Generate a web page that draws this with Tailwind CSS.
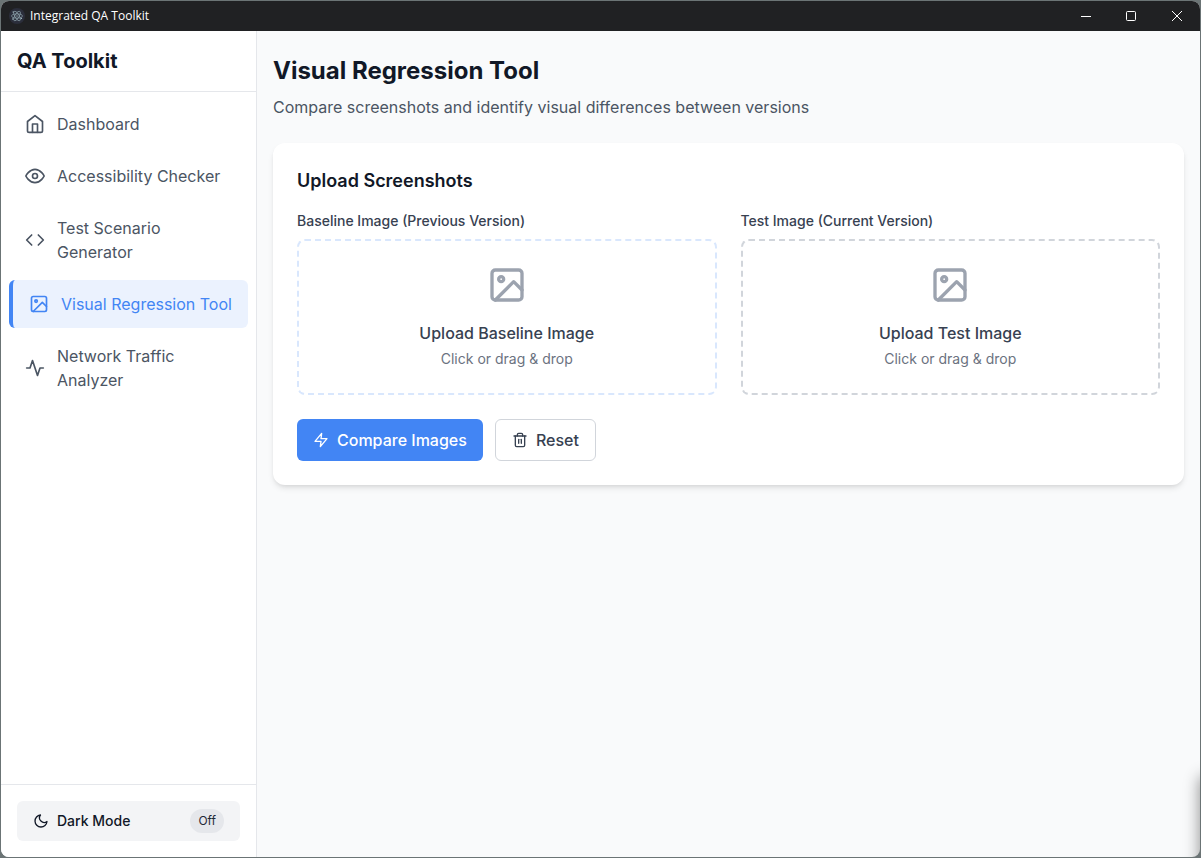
<!DOCTYPE html>
<html lang="en">
<head>
<meta charset="utf-8">
<meta name="viewport" content="width=device-width, initial-scale=1">
<title>Integrated QA Toolkit</title>
<script src="https://cdn.jsdelivr.net/npm/@tailwindcss/browser@4"></script>
</head>
<body class="bg-[#6b7475] font-['Inter',sans-serif] text-[#111827]">
<svg class="hidden" aria-hidden="true">
  <symbol id="image" viewBox="0 0 24 24"><rect x="3" y="3" width="18" height="18" rx="2" ry="2"/><circle cx="8.5" cy="8.5" r="1.5"/><polyline points="21 15 16 10 5 21"/></symbol>
</svg>
<div class="h-screen p-px">
<div class="relative flex h-full flex-col overflow-hidden rounded-lg bg-[#f9fafb]">
  <header class="flex h-[30px] shrink-0 items-center bg-[#202123] pl-2 text-white">
    <svg class="mr-[5px] size-4" viewBox="0 0 16 16" fill="none" stroke="#a9c3cc" stroke-width="0.6" aria-hidden="true">
      <circle cx="8" cy="8" r="8" fill="#2b2e3b" stroke="none"/>
      <g opacity="0.9"><ellipse cx="8" cy="8" rx="5.4" ry="2.1" transform="rotate(0 8 8)"/><ellipse cx="8" cy="8" rx="5.4" ry="2.1" transform="rotate(60 8 8)"/><ellipse cx="8" cy="8" rx="5.4" ry="2.1" transform="rotate(120 8 8)"/>
      <g fill="#a9c3cc" stroke="none"><circle cx="8" cy="8" r="0.7"/><circle cx="4.2" cy="4" r="0.7"/><circle cx="3.8" cy="11" r="0.7"/><circle cx="12.4" cy="10.4" r="0.7"/></g></g>
    </svg>
    <span class="flex-1 font-['Open_Sans','Noto_Sans',sans-serif] text-xs">Integrated QA Toolkit</span>
    <button type="button" aria-label="Minimize" class="flex h-full w-[46px] items-center justify-center"><svg class="size-3" viewBox="0 0 12 12" stroke="currentColor" fill="none"><path d="M2 6.5h10"/></svg></button>
    <button type="button" aria-label="Maximize" class="flex h-full w-[46px] items-center justify-center"><svg class="size-3" viewBox="0 0 12 12" stroke="currentColor" fill="none"><rect x="1.5" y="1.5" width="9" height="9" rx="1"/></svg></button>
    <button type="button" aria-label="Close" class="flex h-full w-[46px] items-center justify-center"><svg class="size-3" viewBox="0 0 12 12" stroke="currentColor" fill="none"><path d="M1 1l10 10M11 1L1 11"/></svg></button>
  </header>
  <div class="flex min-h-0 flex-1">
    <aside class="flex w-64 shrink-0 flex-col border-r border-[#e5e7eb] bg-white">
      <div class="border-b border-[#e5e7eb] p-4"><span class="block text-xl font-bold">QA Toolkit</span></div>
      <nav class="flex flex-1 flex-col gap-1 p-2 text-[#4b5563]">
        <a href="#" class="flex items-center gap-3 rounded-md px-4 py-3">
          <svg class="size-5 shrink-0" viewBox="0 0 24 24" fill="none" stroke="currentColor" stroke-width="2" stroke-linecap="round" stroke-linejoin="round"><path d="M3 9l9-7 9 7v11a2 2 0 0 1-2 2H5a2 2 0 0 1-2-2z"/><polyline points="9 22 9 12 15 12 15 22"/></svg>
          <span>Dashboard</span></a>
        <a href="#" class="flex items-center gap-3 rounded-md px-4 py-3">
          <svg class="size-5 shrink-0" viewBox="0 0 24 24" fill="none" stroke="currentColor" stroke-width="2" stroke-linecap="round" stroke-linejoin="round"><path d="M1 12s4-8 11-8 11 8 11 8-4 8-11 8-11-8-11-8z"/><circle cx="12" cy="12" r="3"/></svg>
          <span>Accessibility Checker</span></a>
        <a href="#" class="flex items-center gap-3 rounded-md px-4 py-3">
          <svg class="size-5 shrink-0" viewBox="0 0 24 24" fill="none" stroke="currentColor" stroke-width="2" stroke-linecap="round" stroke-linejoin="round"><polyline points="16 18 22 12 16 6"/><polyline points="8 6 2 12 8 18"/></svg>
          <span>Test Scenario Generator</span></a>
        <a href="#" aria-current="page" class="flex items-center gap-3 rounded-md border-l-4 border-[#4285f4] bg-[#ebf2fe] py-3 pr-3 pl-4 text-[#4285f4]">
          <svg class="size-5 shrink-0" fill="none" stroke="currentColor" stroke-width="2" stroke-linecap="round" stroke-linejoin="round"><use href="#image"/></svg>
          <span>Visual Regression Tool</span></a>
        <a href="#" class="flex items-center gap-3 rounded-md px-4 py-3">
          <svg class="size-5 shrink-0" viewBox="0 0 24 24" fill="none" stroke="currentColor" stroke-width="2" stroke-linecap="round" stroke-linejoin="round"><polyline points="22 12 18 12 15 21 9 3 6 12 2 12"/></svg>
          <span>Network Traffic Analyzer</span></a>
      </nav>
      <div class="border-t border-[#e5e7eb] p-4">
        <button type="button" aria-pressed="false" class="flex w-full items-center gap-2 rounded-md bg-[#f3f4f6] px-4 py-2 text-sm">
          <svg class="size-4" viewBox="0 0 24 24" fill="none" stroke="currentColor" stroke-width="2" stroke-linecap="round" stroke-linejoin="round"><path d="M21 12.79A9 9 0 1 1 11.21 3 7 7 0 0 0 21 12.79z"/></svg>
          <span class="flex-1 text-left font-medium">Dark Mode</span>
          <span class="rounded-full bg-[#e5e7eb] px-2 py-1 text-xs text-[#1f2937]">Off</span>
        </button>
      </div>
    </aside>
    <main class="min-w-0 flex-1 overflow-hidden px-4 py-6">
      <h1 class="text-2xl font-bold">Visual Regression Tool</h1>
      <p class="mt-2 text-[#4b5563]">Compare screenshots and identify visual differences between versions</p>
      <section class="mt-6 rounded-xl bg-white p-6 shadow-md">
        <h2 class="text-lg font-semibold">Upload Screenshots</h2>
        <div class="mt-4 grid grid-cols-2 gap-6">
          <div>
            <label for="baseline" class="mb-2 block text-sm font-medium text-[#374151]">Baseline Image (Previous Version)</label>
            <label class="flex flex-col items-center rounded-lg border-2 border-dashed border-[#d9e7fd] p-6 text-center">
              <input id="baseline" type="file" accept="image/*" class="sr-only">
              <svg class="mb-4 size-10 text-[#9ca3af]" fill="none" stroke="currentColor" stroke-width="2" stroke-linecap="round" stroke-linejoin="round"><use href="#image"/></svg>
              <span class="font-medium text-[#374151]">Upload Baseline Image</span>
              <span class="mt-1 text-sm text-[#6b7280]">Click or drag &amp; drop</span>
            </label>
          </div>
          <div>
            <label for="test" class="mb-2 block text-sm font-medium text-[#374151]">Test Image (Current Version)</label>
            <label class="flex flex-col items-center rounded-lg border-2 border-dashed border-[#d1d5db] p-6 text-center">
              <input id="test" type="file" accept="image/*" class="sr-only">
              <svg class="mb-4 size-10 text-[#9ca3af]" fill="none" stroke="currentColor" stroke-width="2" stroke-linecap="round" stroke-linejoin="round"><use href="#image"/></svg>
              <span class="font-medium text-[#374151]">Upload Test Image</span>
              <span class="mt-1 text-sm text-[#6b7280]">Click or drag &amp; drop</span>
            </label>
          </div>
        </div>
        <div class="mt-6 flex gap-3">
          <button type="button" class="flex items-center gap-2 rounded-md bg-[#4285f4] px-4 py-2 font-medium text-white">
            <svg class="size-4" viewBox="0 0 24 24" fill="none" stroke="currentColor" stroke-width="2" stroke-linecap="round" stroke-linejoin="round"><polygon points="13 2 3 14 12 14 11 22 21 10 12 10 13 2"/></svg>
            Compare Images</button>
          <button type="button" class="flex items-center gap-2 rounded-md border border-[#d1d5db] bg-white px-4 py-2 font-medium text-[#374151]">
            <svg class="size-4" viewBox="0 0 24 24" fill="none" stroke="currentColor" stroke-width="2" stroke-linecap="round" stroke-linejoin="round"><polyline points="3 6 5 6 21 6"/><path d="M19 6v14a2 2 0 0 1-2 2H7a2 2 0 0 1-2-2V6m3 0V4a2 2 0 0 1 2-2h4a2 2 0 0 1 2 2v2"/><line x1="10" y1="11" x2="10" y2="17"/><line x1="14" y1="11" x2="14" y2="17"/></svg>
            Reset</button>
        </div>
      </section>
    </main>
  </div>
  <!-- Shade cast by a neighbouring window on the lower right edge -->
  <div class="pointer-events-none absolute -right-5 -bottom-5 h-[100px] w-5 shadow-[0_0_16px_rgba(0,0,0,0.45)]" aria-hidden="true"></div>
</div>
</div>
</body>
</html>
